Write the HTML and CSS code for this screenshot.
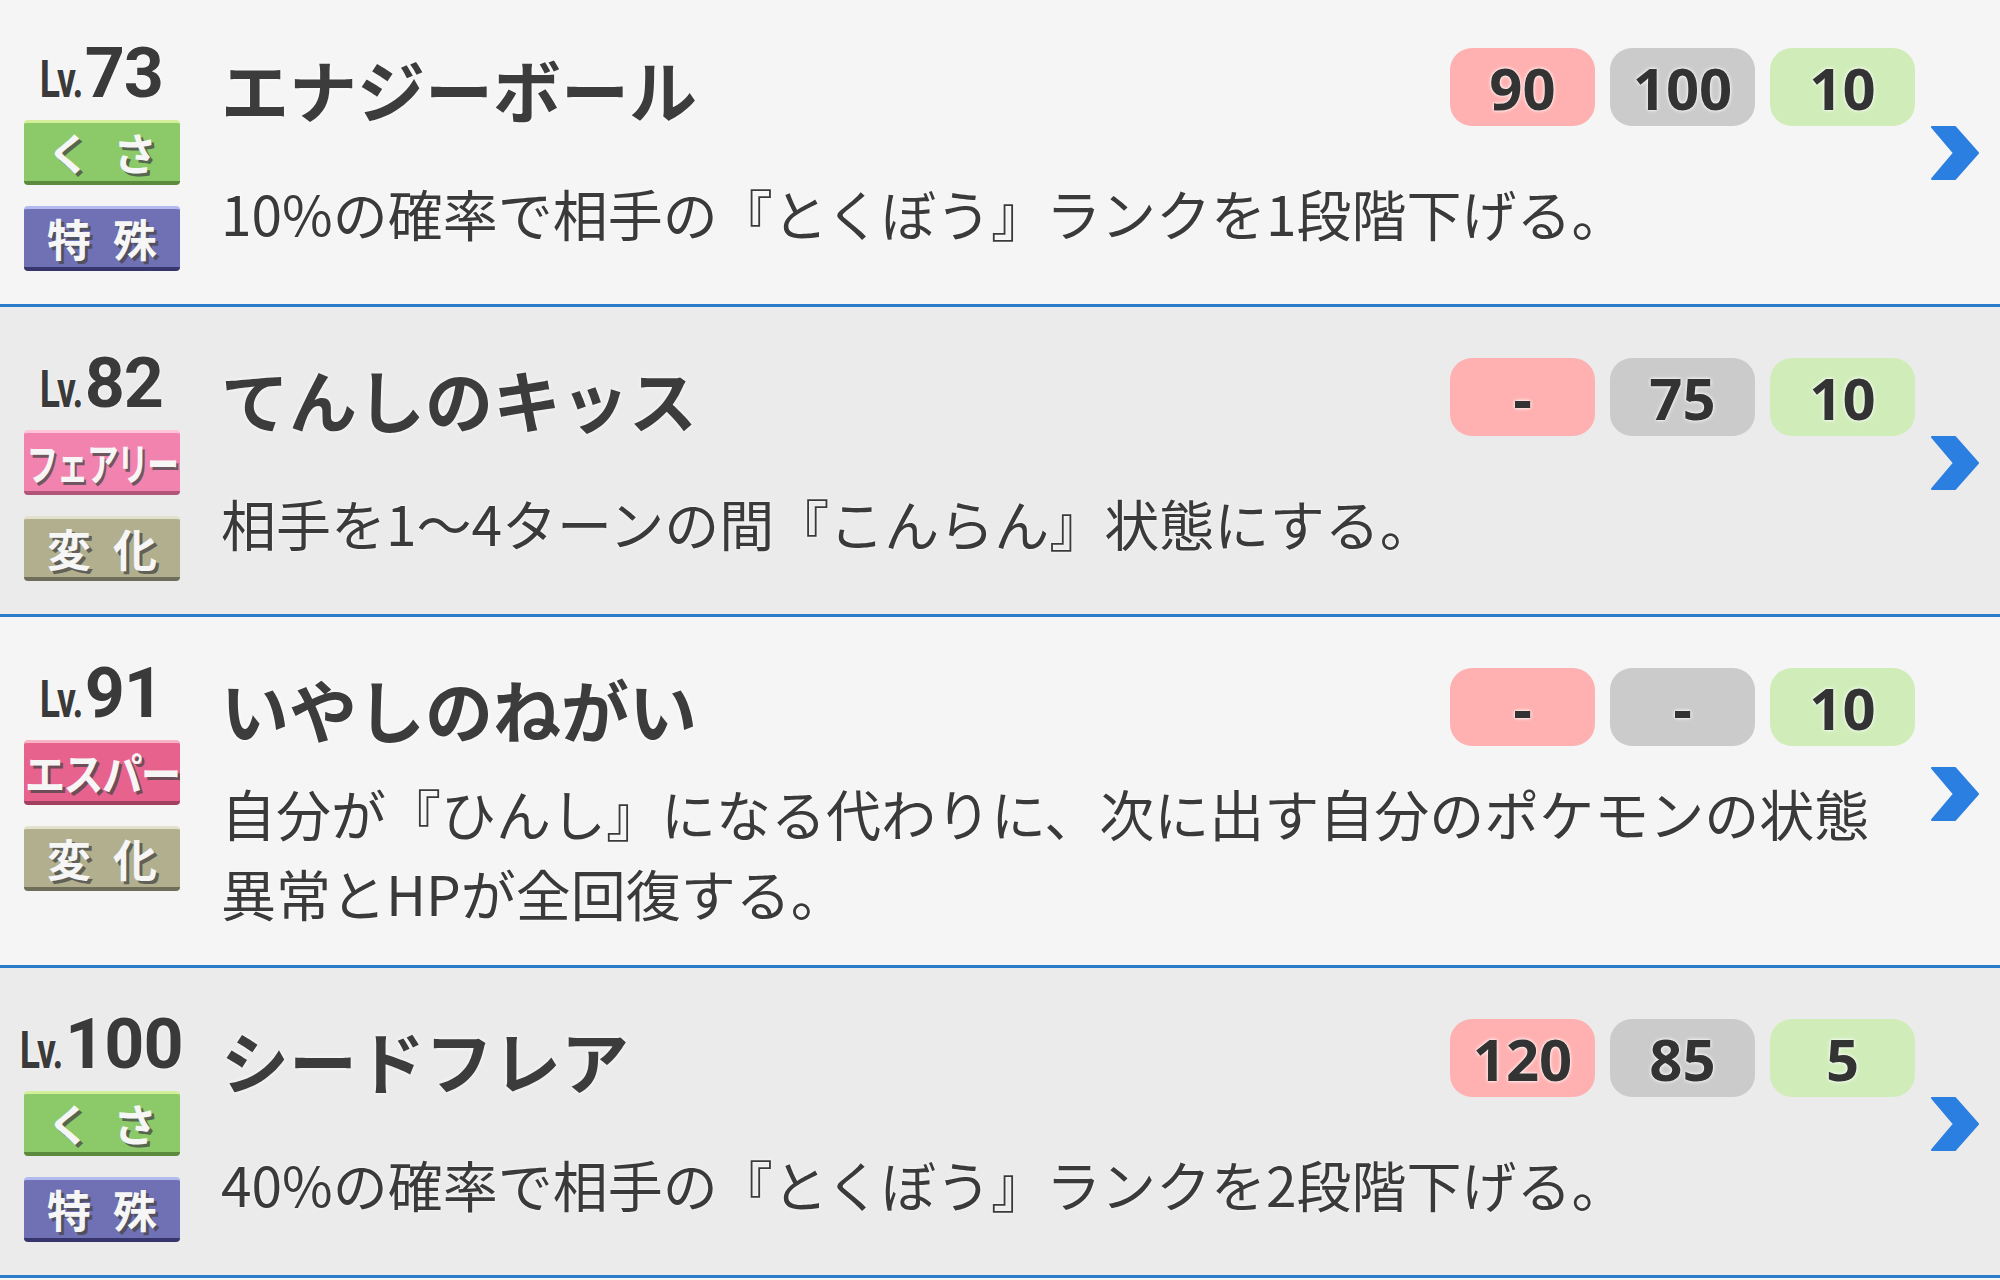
FILE: index.html
```html
<!DOCTYPE html>
<html>
<head>
  <title>わざリスト</title>
  <link rel="stylesheet" href="styles.css">
</head>
<body>
  <ul class="moves">
    <li class="move">
      <div class="learn">
        <div class="level"><span class="lv">Lv.</span>73</div>
        <span class="badge grass"><span>く</span><span>さ</span></span>
        <span class="badge special"><span>特</span><span>殊</span></span>
      </div>
      <div class="info">
        <div class="head">
          <h2 class="name">エナジーボール</h2>
          <div class="stats">
            <span class="stat power">90</span>
            <span class="stat acc">100</span>
            <span class="stat pp">10</span>
          </div>
        </div>
        <p class="desc">10%の確率で相手の『とくぼう』ランクを1段階下げる。</p>
      </div>
      <svg class="chev" width="48" height="54" viewBox="0 0 48 54"><polygon points="1,1 24,1 47,27 24,53 1,53 23,27" fill="#2b7fe0" stroke="#2b7fe0" stroke-width="2" stroke-linejoin="round"/></svg>
    </li>
    <li class="move">
      <div class="learn">
        <div class="level"><span class="lv">Lv.</span>82</div>
        <span class="badge fairy wide"><span>フェアリー</span></span>
        <span class="badge status"><span>変</span><span>化</span></span>
      </div>
      <div class="info">
        <div class="head">
          <h2 class="name">てんしのキッス</h2>
          <div class="stats">
            <span class="stat power">-</span>
            <span class="stat acc">75</span>
            <span class="stat pp">10</span>
          </div>
        </div>
        <p class="desc">相手を1～4ターンの間『こんらん』状態にする。</p>
      </div>
      <svg class="chev" width="48" height="54" viewBox="0 0 48 54"><polygon points="1,1 24,1 47,27 24,53 1,53 23,27" fill="#2b7fe0" stroke="#2b7fe0" stroke-width="2" stroke-linejoin="round"/></svg>
    </li>
    <li class="move">
      <div class="learn">
        <div class="level"><span class="lv">Lv.</span>91</div>
        <span class="badge psychic wide"><span>エスパー</span></span>
        <span class="badge status"><span>変</span><span>化</span></span>
      </div>
      <div class="info">
        <div class="head">
          <h2 class="name">いやしのねがい</h2>
          <div class="stats">
            <span class="stat power">-</span>
            <span class="stat acc">-</span>
            <span class="stat pp">10</span>
          </div>
        </div>
        <p class="desc">自分が『ひんし』になる代わりに、次に出す自分のポケモンの状態異常とHPが全回復する。</p>
      </div>
      <svg class="chev" width="48" height="54" viewBox="0 0 48 54"><polygon points="1,1 24,1 47,27 24,53 1,53 23,27" fill="#2b7fe0" stroke="#2b7fe0" stroke-width="2" stroke-linejoin="round"/></svg>
    </li>
    <li class="move">
      <div class="learn">
        <div class="level"><span class="lv">Lv.</span>100</div>
        <span class="badge grass"><span>く</span><span>さ</span></span>
        <span class="badge special"><span>特</span><span>殊</span></span>
      </div>
      <div class="info">
        <div class="head">
          <h2 class="name">シードフレア</h2>
          <div class="stats">
            <span class="stat power">120</span>
            <span class="stat acc">85</span>
            <span class="stat pp">5</span>
          </div>
        </div>
        <p class="desc">40%の確率で相手の『とくぼう』ランクを2段階下げる。</p>
      </div>
      <svg class="chev" width="48" height="54" viewBox="0 0 48 54"><polygon points="1,1 24,1 47,27 24,53 1,53 23,27" fill="#2b7fe0" stroke="#2b7fe0" stroke-width="2" stroke-linejoin="round"/></svg>
    </li>
  </ul>
</body>
</html>
```
FILE: styles.css
```css
body {
  margin: 0;
  background-color: #f5f5f5;
  font-family: "Noto Sans CJK JP", "Noto Sans", sans-serif;
  color: #3a3a3a;
}
.moves {
  list-style: none;
  margin: 0;
  padding: 0;
}
.move {
  display: flex;
  align-items: stretch;
  padding: 38px 21px 33px 24px;
  background-color: #f5f5f5;
  border-bottom: 3px solid #2b7bcb;
}
.move:first-child {
  padding-top: 35px;
}
.move:nth-child(even) {
  background-color: #ebebeb;
}
.learn {
  width: 156px;
  margin-right: 41px;
  display: flex;
  flex-direction: column;
  align-items: center;
  flex-shrink: 0;
}
.level {
  font-family: Roboto, "Liberation Sans", sans-serif;
  font-weight: 700;
  font-size: 70px;
  line-height: 76px;
  height: 76px;
  color: #3a3a3a;
  white-space: nowrap;
  letter-spacing: -1px;
  text-shadow: 0 0 3px #fff;
}
.level .lv {
  display: inline-block;
  font-size: 52px;
  letter-spacing: -1px;
  transform: scaleX(0.72);
  transform-origin: right bottom;
  margin-left: -18px;
  margin-right: 2px;
}
.badge {
  box-sizing: border-box;
  width: 156px;
  height: 65px;
  border-radius: 4px;
  border-top: 3px solid;
  border-bottom: 4px solid;
  display: flex;
  justify-content: space-around;
  align-items: center;
  overflow: hidden;
  font-weight: 700;
  font-size: 44px;
  line-height: 1;
  color: #f6f6f6;
  text-shadow: 3px 3px 0 rgba(70, 70, 70, 0.75);
  padding: 0 12px;
}
.badge + .badge {
  margin-top: 21px;
}
.level + .badge {
  margin-top: 9px;
}
.badge.wide {
  padding: 0;
  justify-content: center;
}
.badge.wide span {
  display: inline-block;
  white-space: nowrap;
  letter-spacing: -2px;
}
.fairy span {
  transform: scaleX(0.72);
}
.psychic span {
  transform: scaleX(0.92);
}
.grass {
  background-color: #8cc968;
  border-top-color: #d4ef9c;
  border-bottom-color: #5b8a3e;
}
.special {
  background-color: #7070b4;
  border-top-color: #b2baf0;
  border-bottom-color: #36366c;
}
.fairy {
  background-color: #f283ae;
  border-top-color: #ffc4da;
  border-bottom-color: #b25379;
}
.psychic {
  background-color: #e8628e;
  border-top-color: #f8b4c4;
  border-bottom-color: #a23e5e;
}
.status {
  background-color: #b1af8d;
  border-top-color: #e2e2cc;
  border-bottom-color: #6e6e5a;
}
.info {
  flex: 1;
  display: flex;
  flex-direction: column;
  min-width: 0;
}
.head {
  display: flex;
  align-items: flex-start;
}
.name {
  margin: 0 0 9px 0;
  font-size: 68px;
  font-weight: 700;
  line-height: 108px;
  color: #3c3c3c;
  text-shadow: 0 0 4px #fff;
}
.stats {
  margin-left: auto;
  margin-top: 13px;
  display: flex;
  gap: 15px;
}
.stat {
  width: 145px;
  height: 78px;
  border-radius: 22px;
  display: flex;
  justify-content: center;
  align-items: center;
  font-family: "Open Sans", "Noto Sans", sans-serif;
  font-weight: 700;
  font-size: 58px;
  color: #333;
  text-shadow: 0 0 4px #fff, 0 0 2px #fff;
}
.power {
  background-color: #ffb0b0;
}
.acc {
  background-color: #cbcbcb;
}
.pp {
  background-color: #d0edb9;
}
.desc {
  flex: 1;
  display: flex;
  align-items: center;
  margin: 0;
  font-size: 55px;
  line-height: 80px;
  color: #3a3a3a;
  text-shadow: 0 0 3px #fff;
}
.chev {
  align-self: center;
  margin-left: 16px;
  flex-shrink: 0;
}
```
